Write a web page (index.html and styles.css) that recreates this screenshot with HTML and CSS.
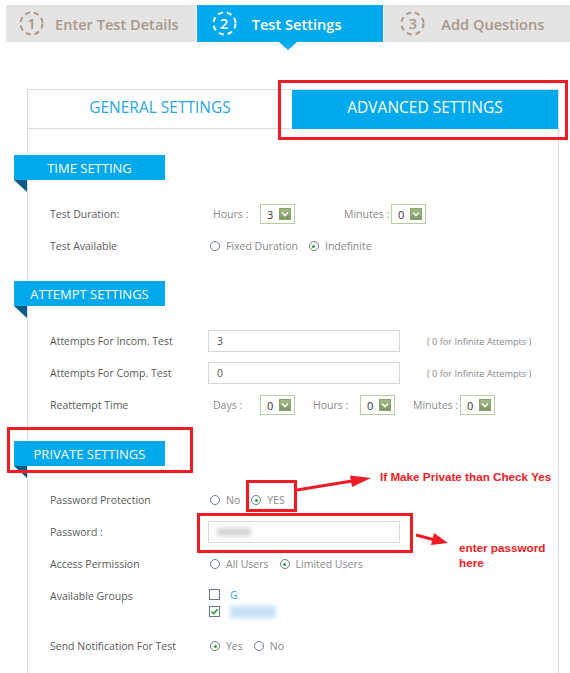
FILE: index.html
```html
<!DOCTYPE html>
<html>
<head>
<meta charset="utf-8">
<link rel="stylesheet" href="styles.css">
</head>
<body>
<div class="page">
  <div class="steps">
    <div class="step step-1">
      <span class="num"><svg width="25" height="25" viewBox="0 0 25 25"><circle cx="12.5" cy="12.5" r="11" fill="none" stroke="currentColor" stroke-width="2" stroke-dasharray="5 4"/></svg><b>1</b></span>
      <span class="step-text">Enter Test Details</span>
    </div>
    <div class="step step-2 active">
      <span class="num"><svg width="25" height="25" viewBox="0 0 25 25"><circle cx="12.5" cy="12.5" r="11" fill="none" stroke="currentColor" stroke-width="2" stroke-dasharray="5 4"/></svg><b>2</b></span>
      <span class="step-text">Test Settings</span>
    </div>
    <div class="step step-3">
      <span class="num"><svg width="25" height="25" viewBox="0 0 25 25"><circle cx="12.5" cy="12.5" r="11" fill="none" stroke="currentColor" stroke-width="2" stroke-dasharray="5 4"/></svg><b>3</b></span>
      <span class="step-text">Add Questions</span>
    </div>
  </div>

  <div class="card">
    <div class="tabs">
      <div class="tab tab-general">GENERAL SETTINGS</div>
      <div class="tab tab-advanced">ADVANCED SETTINGS</div>
    </div>

    <div class="head head-time">TIME SETTING</div>
    <div class="row">
      <div class="label">Test Duration:</div>
      <div class="controls">
        <span class="sel-label">Hours :</span>
        <span class="select"><span>3</span><span class="arrow"><svg width="8" height="6" viewBox="0 0 8 6"><path d="M1 1.5 L4 4.5 L7 1.5" fill="none" stroke="#fff" stroke-width="1.6"/></svg></span></span>
        <span class="sel-label wide-gap">Minutes :</span>
        <span class="select"><span>0</span><span class="arrow"><svg width="8" height="6" viewBox="0 0 8 6"><path d="M1 1.5 L4 4.5 L7 1.5" fill="none" stroke="#fff" stroke-width="1.6"/></svg></span></span>
      </div>
    </div>
    <div class="row">
      <div class="label">Test Available</div>
      <div class="controls radios">
        <span class="radio"></span><span class="opt">Fixed Duration</span>
        <span class="radio checked"></span><span class="opt">Indefinite</span>
      </div>
    </div>

    <div class="head head-attempt">ATTEMPT SETTINGS</div>
    <div class="row">
      <div class="label">Attempts For Incom. Test</div>
      <div class="controls">
        <span class="input">3</span>
        <span class="hint">( 0 for Infinite Attempts )</span>
      </div>
    </div>
    <div class="row">
      <div class="label">Attempts For Comp. Test</div>
      <div class="controls">
        <span class="input">0</span>
        <span class="hint">( 0 for Infinite Attempts )</span>
      </div>
    </div>
    <div class="row">
      <div class="label">Reattempt Time</div>
      <div class="controls">
        <span class="sel-label">Days :</span>
        <span class="select"><span>0</span><span class="arrow"><svg width="8" height="6" viewBox="0 0 8 6"><path d="M1 1.5 L4 4.5 L7 1.5" fill="none" stroke="#fff" stroke-width="1.6"/></svg></span></span>
        <span class="sel-label small-gap">Hours :</span>
        <span class="select"><span>0</span><span class="arrow"><svg width="8" height="6" viewBox="0 0 8 6"><path d="M1 1.5 L4 4.5 L7 1.5" fill="none" stroke="#fff" stroke-width="1.6"/></svg></span></span>
        <span class="sel-label small-gap">Minutes :</span>
        <span class="select"><span>0</span><span class="arrow"><svg width="8" height="6" viewBox="0 0 8 6"><path d="M1 1.5 L4 4.5 L7 1.5" fill="none" stroke="#fff" stroke-width="1.6"/></svg></span></span>
      </div>
    </div>

    <div class="head head-private">PRIVATE SETTINGS</div>
    <div class="row">
      <div class="label">Password Protection</div>
      <div class="controls radios">
        <span class="radio"></span><span class="opt">No</span>
        <span class="radio checked"></span><span class="opt">YES</span>
      </div>
    </div>
    <div class="row">
      <div class="label">Password :</div>
      <div class="controls">
        <span class="input"><span class="blur-grey"></span></span>
      </div>
    </div>
    <div class="row">
      <div class="label">Access Permission</div>
      <div class="controls radios">
        <span class="radio"></span><span class="opt">All Users</span>
        <span class="radio checked"></span><span class="opt">Limited Users</span>
      </div>
    </div>
    <div class="row row-groups">
      <div class="label">Available Groups</div>
      <div class="groups">
        <div class="group"><span class="checkbox"></span><span class="group-name">G</span></div>
        <div class="group"><span class="checkbox checked"><svg width="9" height="9" viewBox="0 0 9 9"><path d="M1.5 4.5 L3.7 6.6 L7.6 2.2" fill="none" stroke="#2f9a2f" stroke-width="1.6"/></svg></span><span class="blur-blue"></span></div>
      </div>
    </div>
    <div class="row">
      <div class="label">Send Notification For Test</div>
      <div class="controls radios">
        <span class="radio checked"></span><span class="opt">Yes</span>
        <span class="radio"></span><span class="opt">No</span>
      </div>
    </div>
  </div>

  <svg class="marks" width="570" height="673" viewBox="0 0 570 673">
    <g fill="none" stroke="#ee1c24" stroke-width="3">
      <rect x="279.5" y="81.5" width="287" height="57"/>
      <rect x="8.5" y="428.5" width="183" height="43"/>
      <rect x="247.5" y="481.5" width="48" height="29"/>
      <rect x="198.5" y="514.5" width="213" height="37"/>
      <line x1="297" y1="490" x2="352" y2="481"/>
      <line x1="416" y1="535" x2="433" y2="539.5"/>
    </g>
    <g fill="#ee1c24">
      <polygon points="371,478 350,475.5 352,487"/>
      <polygon points="448,543 434,533 431,545"/>
    </g>
  </svg>
  <div class="note note-1">If Make Private than Check Yes</div>
  <div class="note note-2">enter password<br>here</div>
</div>
</body>
</html>
```

FILE: styles.css
```css
* { box-sizing: border-box; }
body {
  margin: 0;
  background: #fff;
  font-family: "Open Sans", "Noto Sans", sans-serif;
}
.page {
  position: relative;
  width: 570px;
  height: 673px;
  overflow: hidden;
}

/* step bar */
.steps {
  display: flex;
  gap: 1px;
  margin: 5px 0 0 6px;
  height: 37px;
}
.step {
  position: relative;
  display: flex;
  align-items: center;
  background: #e4e4e4;
  color: #a8998a;
  font-size: 14.6px;
  font-weight: 600;
}
.step-1 { width: 190px; padding-left: 13px; }
.step-2 { width: 187px; padding-left: 15px; }
.step-3 { width: 186px; padding-left: 16px; }
.step.active { background: #00a8ec; color: #fff; }
.step.active::after {
  content: "";
  position: absolute;
  left: 82px;
  top: 100%;
  border-left: 9px solid transparent;
  border-right: 9px solid transparent;
  border-top: 8px solid #00a8ec;
}
.num {
  position: relative;
  width: 25px;
  height: 25px;
  display: flex;
  align-items: center;
  justify-content: center;
  margin-right: 11px;
}
.step-2 .num { margin-right: 15px; }
.step-3 .num { margin-right: 16px; }
.num svg { position: absolute; left: 0; top: 0; }
.num b { font-weight: 600; font-size: 15px; line-height: 1; }

/* card */
.card {
  margin: 47px 0 0 27px;
  width: 532px;
  height: 600px;
  border: 1px solid #dcdcdc;
  border-bottom: none;
}
.tabs {
  display: flex;
  height: 39px;
}
.tab {
  display: flex;
  align-items: center;
  justify-content: center;
  font-size: 15.5px;
  padding-bottom: 4px;
}
.tab-general {
  width: 264px;
  color: #2aa4e2;
  border-bottom: 1px solid #dcdcdc;
}
.tab-advanced {
  width: 266px;
  background: #00a8ec;
  color: #fff;
  padding-bottom: 5px;
}

/* section ribbons */
.head {
  position: relative;
  width: 151px;
  height: 25px;
  margin-left: -14px;
  background: #00a8ec;
  color: #fff;
  font-size: 13px;
  display: flex;
  align-items: center;
  justify-content: center;
}
.head::after {
  content: "";
  position: absolute;
  left: 0;
  top: 100%;
  border-left: 13px solid transparent;
  border-top: 12px solid #0b5b86;
}
.head-time { margin-top: 26px; margin-bottom: 18px; }
.head-attempt { margin-top: 19px; margin-bottom: 19px; }
.head-private { margin-top: 20px; margin-bottom: 18px; }

/* rows */
.row {
  display: flex;
  align-items: center;
  height: 32px;
  padding-left: 22px;
}
.label {
  width: 158px;
  flex: none;
  font-size: 10.5px;
  color: #5a5a5a;
}
.controls {
  display: flex;
  align-items: center;
  font-size: 10.5px;
  color: #888;
}
.sel-label {
  flex: none;
  min-width: 52px;
  padding-left: 5px;
  white-space: nowrap;
  color: #8a8a8a;
}
.sel-label.wide-gap { margin-left: 44px; }
.sel-label.small-gap { margin-left: 13px; }
.select {
  flex: none;
  width: 35px;
  height: 20px;
  border: 1px solid #b7cf9f;
  display: flex;
  align-items: center;
  justify-content: space-between;
  padding: 0 3px 0 6px;
  color: #333;
  font-size: 11px;
}
.arrow {
  width: 12px;
  height: 12px;
  background: linear-gradient(#a3ba86, #7e9862);
  border: 1px solid #8aa26e;
  display: flex;
  align-items: center;
  justify-content: center;
}

.radios { padding-left: 2px; }
.radio {
  width: 10px;
  height: 10px;
  border: 1px solid #6d7c8c;
  border-radius: 50%;
  background: #fff;
  margin-right: 6px;
  position: relative;
  flex: none;
}
.radio.checked::after {
  content: "";
  position: absolute;
  left: 2.5px;
  top: 2.5px;
  width: 3px;
  height: 3px;
  border-radius: 50%;
  background: #2aa52a;
}
.opt { margin-right: 11px; color: #888; }

.input {
  width: 192px;
  height: 22px;
  border: 1px solid #d6d6d6;
  display: flex;
  align-items: center;
  padding-left: 8px;
  font-size: 10.5px;
  color: #555;
}
.hint {
  margin-left: 27px;
  font-size: 9.2px;
  color: #8a8a8a;
}
.blur-grey {
  width: 34px;
  height: 8px;
  background: #d4d4d4;
  filter: blur(2px);
}

.row-groups {
  height: 50px;
  align-items: flex-start;
}
.row-groups .label { line-height: 32px; }
.groups { padding-top: 6px; }
.group {
  display: flex;
  align-items: center;
  height: 17px;
  padding-left: 1px;
}
.checkbox {
  width: 11px;
  height: 11px;
  border: 1px solid #6a7888;
  background: #fff;
  display: flex;
  align-items: center;
  justify-content: center;
  margin-right: 10px;
}
.group-name {
  color: #3b9fe0;
  font-size: 10.5px;
}
.blur-blue {
  width: 46px;
  height: 12px;
  background: #c6e1f6;
  filter: blur(2px);
}

/* annotations */
.marks {
  position: absolute;
  left: 0;
  top: 0;
  pointer-events: none;
}
.note {
  position: absolute;
  font-family: "Liberation Sans", Arial, sans-serif;
  font-weight: bold;
  font-size: 11.7px;
  color: #ee1c24;
  line-height: 15px;
}
.note-1 { left: 380px; top: 469px; }
.note-2 { left: 459px; top: 540px; }
```
